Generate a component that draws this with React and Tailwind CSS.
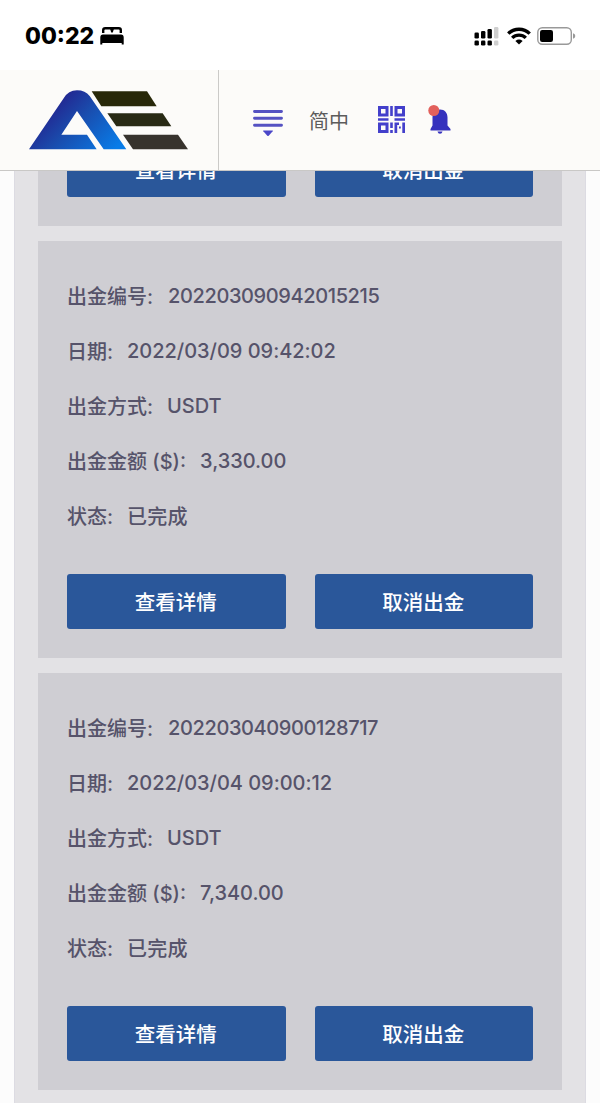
const WITHDRAWALS = [
  { id: '202203090942015215', date: '2022/03/09 09:42:02', method: 'USDT', amount: '3,330.00', status: '已完成' },
  { id: '202203040900128717', date: '2022/03/04 09:00:12', method: 'USDT', amount: '7,340.00', status: '已完成' },
];

function StatusBar() {
  return (
    <div className="flex h-[70px] shrink-0 items-center bg-white pl-[25px] pr-6 pt-0.5 text-black">
      <span className="font-['Inter'] text-[23px] font-extrabold leading-none">00:22</span>
      <svg className="ml-[6px]" width="24" height="18" viewBox="0 0 24 18">
        <path d="M3.200 6V3.200Q3.200 1.200 5.200 1.200h13.600q2 0 2 2V6" fill="none" stroke="#000" strokeWidth="2.400" />
        <path d="M9.800 1h4.400L12.800 5.500h-1.600z" />
        <path d="M3 7.500h18q2.700 0 2.700 3v7h-2V16H2.300v1.500h-2v-7Q.3 7.500 3 7.500z" />
      </svg>
      <div className="ml-auto flex items-center">
        <svg width="25" height="20" viewBox="0 0 25 20">
          <rect x="0.500" y="6.500" width="4.400" height="6" rx="1.300" />
          <rect x="7" y="5" width="4.400" height="7.500" rx="1.300" />
          <rect x="13.500" y="3" width="4.400" height="9.500" rx="1.300" />
          <rect x="20" y="1" width="4.400" height="11.500" rx="1.300" fill="#cfcfcf" />
          <rect x="0.500" y="14.500" width="4.400" height="5" rx="1.300" />
          <rect x="7" y="14.500" width="4.400" height="5" rx="1.300" />
          <rect x="13.500" y="14.500" width="4.400" height="5" rx="1.300" />
          <rect x="20" y="14.500" width="4.400" height="5" rx="1.300" fill="#cfcfcf" />
        </svg>
        <svg className="ml-2" width="24" height="18" viewBox="0 0 24 18" fill="none" stroke="#000" strokeWidth="3.400">
          <path d="M1.300 6.600C7.200.8 16.800.8 22.700 6.600" />
          <path d="M5.200 10.900c3.800-3.700 9.800-3.700 13.600 0" />
          <path d="M8.400 13.900q3.600-2.600 7.200 0L12 17.500z" fill="#000" stroke="none" />
        </svg>
        <svg className="ml-[6px]" width="39" height="18" viewBox="0 0 39 18">
          <rect x=".8" y=".8" width="33.500" height="16.400" rx="4.500" fill="none" stroke="#999" strokeWidth="1.400" />
          <rect x="3" y="3" width="13" height="12" rx="2.200" />
          <path d="M36 6.200q2.300.8 2.300 2.800T36 11.800z" fill="#999" />
        </svg>
      </div>
    </div>
  );
}

function Logo() {
  return (
    <svg width="159" height="60" viewBox="88 74 477 180">
      <defs>
        <linearGradient id="letterA" x1="0" y1="0.2" x2="1" y2="0.8">
          <stop offset="0.15" stopColor="#24208c" />
          <stop offset="0.5" stopColor="#1a4bac" />
          <stop offset="1" stopColor="#087ce8" />
        </linearGradient>
      </defs>
      <path
        d="M88 252L192 99Q206 75 232 75Q257 75 270 92L380 252H312L232 137L185 208H262L291 252Z"
        fill="url(#letterA)"
      />
      <path d="M276 78H442L471 123H305Z" fill="#282809" />
      <path d="M323 144H489L515 183H350Z" fill="#292a14" />
      <path d="M370 208H535L565 252H400Z" fill="#37332d" />
    </svg>
  );
}

function QrIcon() {
  return (
    <svg width="27" height="27" viewBox="0 0 27 27" fill="#433fcb">
      <path fillRule="evenodd" d="M0 0h10.500v10.500H0zM3 3v4.500h4.500V3z" />
      <path fillRule="evenodd" d="M16.500 0H27v10.500H16.500zM19.500 3v4.500H24V3z" />
      <path fillRule="evenodd" d="M0 16.500h10.500V27H0zM3 19.500V24h4.500v-4.500z" />
      <path d="M12.200 0h2.600v10h-2.600zM0 12.200h10.500v2.600H0zM16.500 12.200H27v2.600H16.500z" />
      <path d="M12.200 16.500h2.600v5.500h-2.600zM12.200 24h2.600v3h-2.600zM16.500 16.500h2.700V27h-2.700zM24.300 16.500H27V27h-2.700zM19 16.500h2v2.500h-2zM21 20.500h1.800v2h-1.800z" />
    </svg>
  );
}

function Header() {
  return (
    <header className="flex h-[101px] shrink-0 border-b border-[#c9c8c6] bg-[#fcfbf9]">
      <div className="flex w-[219px] items-center border-r border-[#cbcac8] pl-[29px]">
        <Logo />
      </div>
      <div className="flex flex-1 items-center pl-[34px]">
        <button>
          <svg className="mt-1.5" width="30" height="28" viewBox="0 0 30 28">
            <path d="M1.500 2.500h27M1.500 9.300h27M1.500 16.200h27" stroke="#5552c2" strokeWidth="2.900" strokeLinecap="round" />
            <path d="M10.500 21.500h9q.8 0 .2.800L15.700 26.700q-.7.600-1.400 0L10.300 22.300q-.6-.8.200-.8z" fill="#4a46c8" />
          </svg>
        </button>
        <span className="ml-[26px] pt-[3px] text-[20px] leading-none text-[#5c5c5c]">简中</span>
        <span className="ml-[29px] pb-px">
          <QrIcon />
        </span>
        <svg className="ml-[22px]" width="25" height="30" viewBox="0 0 25 30">
          <path d="M13 4.500c4.800 0 7.500 3.500 7.500 8v8l3 3.500v1.500h-20V24l2-3.500v-8c0-4.500 2.700-8 7.500-8z" fill="#3531bd" />
          <path d="M10.500 26.500h5q-.5 2.200-2.500 2.200t-2.500-2.200z" fill="#3531bd" />
          <circle cx="6.800" cy="5.500" r="5.500" fill="#e2605c" />
        </svg>
      </div>
    </header>
  );
}

function Row({ label, value, tight }) {
  return (
    <div className="flex h-[55px] items-center">
      <span className="whitespace-pre pt-0.5">{label}:</span>
      <span className={tight ? 'ml-[15px] pt-px tracking-[-0.39px]' : 'ml-[14px] pt-px tracking-[-0.03px]'}>{value}</span>
    </div>
  );
}

function Actions() {
  return (
    <div className="flex gap-[29px] text-[20.5px] font-medium leading-none text-white">
      <button className="h-[55px] flex-1 rounded-[3px] bg-[#2a579a] pr-px pt-[3px]">查看详情</button>
      <button className="h-[55px] flex-1 rounded-[3px] bg-[#2a579a] pr-px pt-[3px]">取消出金</button>
    </div>
  );
}

function WithdrawalCard({ item }) {
  return (
    <div className="h-[417px] shrink-0 bg-[#cfced3] px-[29px] pt-[27px] text-[20px] font-medium leading-none text-[#56536a]">
      <Row label="出金编号" value={item.id} tight />
      <Row label="日期" value={item.date} />
      <Row label="出金方式" value={item.method} />
      <Row label="出金金额 ($)" value={item.amount} />
      <Row label="状态" value={<span className="block pt-px tracking-[0.15px]">{item.status}</span>} />
      <div className="mt-[31px]">
        <Actions />
      </div>
    </div>
  );
}

export default function App() {
  return (
    <div className="flex h-[1103px] w-[600px] flex-col overflow-hidden bg-[#fcfcfc] font-['Inter','Noto_Sans_CJK_SC',sans-serif]">
      <StatusBar />
      <Header />
      <main className="flex min-h-0 flex-1 flex-col justify-end overflow-hidden px-[14px]">
        <div className="flex shrink-0 flex-col gap-[15px] border-x border-[#dcdbe2] bg-[#e3e2e5] px-[23px] pb-[13px]">
          {/* tail of the card scrolled under the header */}
          <div className="bg-[#cfced3] px-[29px] pb-[29px]">
            <Actions />
          </div>
          {WITHDRAWALS.map((item) => (
            <WithdrawalCard key={item.id} item={item} />
          ))}
        </div>
      </main>
    </div>
  );
}
